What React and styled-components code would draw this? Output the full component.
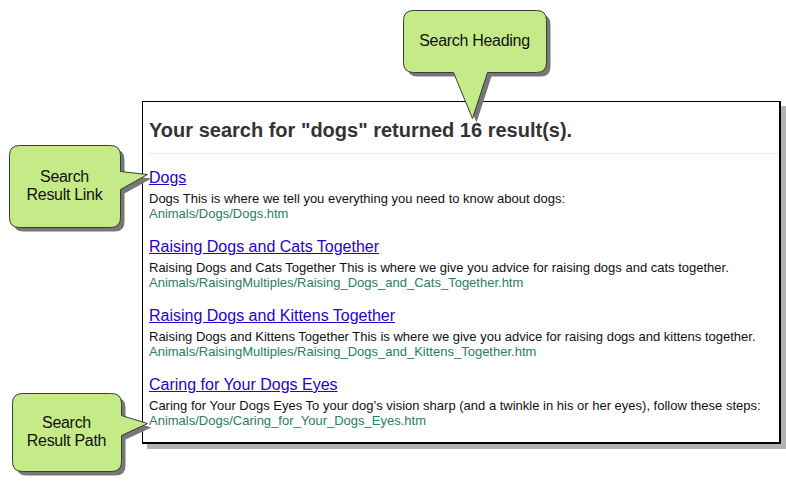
import React from 'react'
import styled, { createGlobalStyle } from 'styled-components'

const GlobalStyle = createGlobalStyle`
    html, body {
        margin: 0;
        padding: 0;
        background: #ffffff;
    }
    body {
        font-family: "Liberation Sans", Arial, sans-serif;
    }
`

const results = [
    {
        title: 'Dogs',
        text: 'Dogs This is where we tell you everything you need to know about dogs:',
        path: 'Animals/Dogs/Dogs.htm',
    },
    {
        title: 'Raising Dogs and Cats Together',
        text: 'Raising Dogs and Cats Together This is where we give you advice for raising dogs and cats together.',
        path: 'Animals/RaisingMultiples/Raising_Dogs_and_Cats_Together.htm',
    },
    {
        title: 'Raising Dogs and Kittens Together',
        text: 'Raising Dogs and Kittens Together This is where we give you advice for raising dogs and kittens together.',
        path: 'Animals/RaisingMultiples/Raising_Dogs_and_Kittens_Together.htm',
    },
    {
        title: 'Caring for Your Dogs Eyes',
        text: 'Caring for Your Dogs Eyes To your dog\u2019s vision sharp (and a twinkle in his or her eyes), follow these steps:',
        path: 'Animals/Dogs/Caring_for_Your_Dogs_Eyes.htm',
    },
]

{/* callout shapes, drawn in their own box coordinates */}
const callouts = [
    {
        x: 403, y: 10, w: 150, h: 114,
        box: { w: 143, h: 62 },
        d: 'M10,0 H133 Q143,0 143,10 V52 Q143,62 133,62 H84 L69,108 L50,62 H10 Q0,62 0,52 V10 Q0,0 10,0 Z',
        lines: ['Search Heading'],
    },
    {
        x: 9, y: 145, w: 145, h: 90,
        box: { w: 111, h: 82 },
        d: 'M10,0 H101 Q111,0 111,10 V26 L138,29 L111,44 V72 Q111,82 101,82 H10 Q0,82 0,72 V10 Q0,0 10,0 Z',
        lines: ['Search', 'Result Link'],
    },
    {
        x: 12, y: 393, w: 142, h: 86,
        box: { w: 109, h: 78 },
        d: 'M10,0 H99 Q109,0 109,10 V22 L135,30 L109,42 V68 Q109,78 99,78 H10 Q0,78 0,68 V10 Q0,0 10,0 Z',
        lines: ['Search', 'Result Path'],
    },
]

const Callout = ({ c }) => (
    <CalloutWrap style={{ left: c.x, top: c.y, width: c.w, height: c.h }}>
        <svg width={c.w} height={c.h} viewBox={`0 0 ${c.w} ${c.h}`}>
            <path d={c.d} transform="translate(4.5 4.5)" fill="#777777" />
            <path d={c.d} transform="translate(0.5 0.5)" fill="#c5eb88" stroke="#3a3a3a" strokeWidth="1" />
        </svg>
        <CalloutLabel style={{ width: c.box.w, height: c.box.h }}>
            {c.lines.map((l) => <span key={l}>{l}</span>)}
        </CalloutLabel>
    </CalloutWrap>
)

const App = () => {
    return (
        <Page>
            <GlobalStyle />
            <Panel>
                <Heading>Your search for "dogs" returned 16 result(s).</Heading>
                <Divider />
                <ResultList>
                    {results.map((r) => (
                        <Result key={r.title}>
                            <ResultLink href="#">{r.title}</ResultLink>
                            <ResultText>{r.text}</ResultText>
                            <ResultPath>{r.path}</ResultPath>
                        </Result>
                    ))}
                </ResultList>
            </Panel>
            {callouts.map((c, i) => <Callout key={i} c={c} />)}
        </Page>
    )
}

const Page = styled.div`
    position: relative;
    width: 786px;
    height: 487px;
    padding: 101px 0 0 142px;
    box-sizing: border-box;
    overflow: hidden;
`

const Panel = styled.div`
    width: 639px;
    box-sizing: border-box;
    border-style: solid;
    border-color: #000;
    border-width: 1px 2px 2px 1px;
    box-shadow: 5px 5px 0 #b2b2b2;
    background: #fff;
    padding: 16px 0 14px 6px;
`

const Heading = styled.h1`
    margin: 0;
    font-size: 20px;
    line-height: 24px;
    font-weight: bold;
    color: #333333;
`

const Divider = styled.div`
    height: 1px;
    background: #e8e8e8;
    margin: 11px 0 14px 0;
`

const ResultList = styled.div`
    display: flex;
    flex-direction: column;
    gap: 16px;
`

const Result = styled.div`
    display: flex;
    flex-direction: column;
`

const ResultLink = styled.a`
    font-size: 16px;
    line-height: 20px;
    color: #2a00cc;
    text-decoration: underline;
    align-self: flex-start;
    margin-bottom: 3px;
`

const ResultText = styled.div`
    font-size: 13px;
    line-height: 15px;
    color: #111;
`

const ResultPath = styled.div`
    font-size: 13px;
    line-height: 15px;
    color: #2b7d5f;
`

const CalloutWrap = styled.div`
    position: absolute;
    pointer-events: none;

    svg {
        position: absolute;
        left: 0;
        top: 0;
    }
`

const CalloutLabel = styled.div`
    position: absolute;
    left: 0;
    top: 0;
    display: flex;
    flex-direction: column;
    align-items: center;
    justify-content: center;
    font-size: 16px;
    line-height: 18px;
    color: #111;
    letter-spacing: -0.3px;
`

export default App
